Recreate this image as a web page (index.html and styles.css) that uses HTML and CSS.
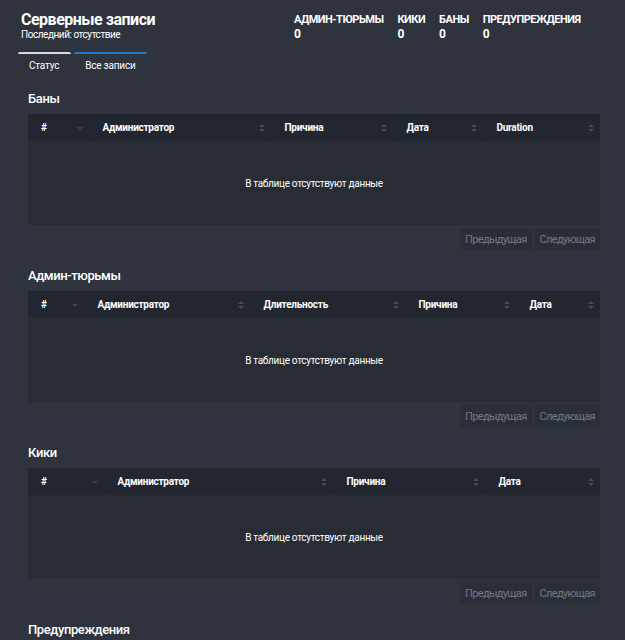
FILE: index.html
```html
<!DOCTYPE html>
<html lang="ru">
<head>
  <meta charset="UTF-8">
  <meta name="viewport" content="width=device-width, initial-scale=1.0">
  <title>Серверные записи</title>
  <link rel="stylesheet" href="styles.css">
</head>
<body>
  <header class="top">
    <div class="title-block">
      <h1>Серверные записи</h1>
      <p class="last">Последний: отсутствие</p>
    </div>
    <div class="stats">
      <div class="stat"><span class="stat-label">Админ-тюрьмы</span><span class="stat-value">0</span></div>
      <div class="stat"><span class="stat-label">Кики</span><span class="stat-value">0</span></div>
      <div class="stat"><span class="stat-label">Баны</span><span class="stat-value">0</span></div>
      <div class="stat"><span class="stat-label">Предупреждения</span><span class="stat-value">0</span></div>
    </div>
  </header>

  <nav class="tabs">
    <a href="#status" class="tab">Статус</a>
    <a href="#all" class="tab active">Все записи</a>
  </nav>

  <main>
    <!-- Bans -->
    <section class="records">
      <h2>Баны</h2>
      <table class="grid">
        <colgroup>
          <col style="width:61px"><col style="width:182px"><col style="width:122px"><col style="width:90px"><col style="width:117px">
        </colgroup>
        <thead>
          <tr>
            <th class="sorted"># <span class="sort down"></span></th>
            <th>Администратор <span class="sort"></span></th>
            <th>Причина <span class="sort"></span></th>
            <th>Дата <span class="sort"></span></th>
            <th>Duration <span class="sort"></span></th>
          </tr>
        </thead>
        <tbody>
          <tr><td colspan="5" class="empty">В таблице отсутствуют данные</td></tr>
        </tbody>
      </table>
      <div class="pager">
        <button class="page-btn" disabled>Предыдущая</button>
        <button class="page-btn" disabled>Следующая</button>
      </div>
    </section>

    <!-- Admin jails -->
    <section class="records">
      <h2>Админ-тюрьмы</h2>
      <table class="grid">
        <colgroup>
          <col style="width:56px"><col style="width:166px"><col style="width:155px"><col style="width:111px"><col style="width:84px">
        </colgroup>
        <thead>
          <tr>
            <th class="sorted"># <span class="sort down"></span></th>
            <th>Администратор <span class="sort"></span></th>
            <th>Длительность <span class="sort"></span></th>
            <th>Причина <span class="sort"></span></th>
            <th>Дата <span class="sort"></span></th>
          </tr>
        </thead>
        <tbody>
          <tr><td colspan="5" class="empty">В таблице отсутствуют данные</td></tr>
        </tbody>
      </table>
      <div class="pager">
        <button class="page-btn" disabled>Предыдущая</button>
        <button class="page-btn" disabled>Следующая</button>
      </div>
    </section>

    <!-- Kicks -->
    <section class="records">
      <h2>Кики</h2>
      <table class="grid">
        <colgroup>
          <col style="width:76px"><col style="width:229px"><col style="width:152px"><col style="width:115px">
        </colgroup>
        <thead>
          <tr>
            <th class="sorted"># <span class="sort down"></span></th>
            <th>Администратор <span class="sort"></span></th>
            <th>Причина <span class="sort"></span></th>
            <th>Дата <span class="sort"></span></th>
          </tr>
        </thead>
        <tbody>
          <tr><td colspan="4" class="empty">В таблице отсутствуют данные</td></tr>
        </tbody>
      </table>
      <div class="pager">
        <button class="page-btn" disabled>Предыдущая</button>
        <button class="page-btn" disabled>Следующая</button>
      </div>
    </section>

    <!-- Warnings -->
    <section class="records">
      <h2>Предупреждения</h2>
    </section>
  </main>
</body>
</html>
```

FILE: styles.css
```css
/* General */
html, body {
  margin: 0;
  padding: 0;
  background: #2e333d;
  color: #fff;
  font-family: Roboto, 'Liberation Sans', sans-serif;
  font-size: 11px;
  overflow: hidden;
}
body {
  height: 640px;
}
/* Header */
.top {
  display: flex;
  padding: 10px 0 0 21px;
}
.title-block {
  width: 273px;
}
h1 {
  margin: 0;
  font-size: 16px;
  font-weight: 700;
  line-height: 19px;
  letter-spacing: -0.5px;
}
.last {
  margin: -1px 0 0;
  font-size: 10px;
  line-height: 13px;
  letter-spacing: -0.45px;
}
.stats {
  display: flex;
  gap: 14px;
  padding-top: 3px;
}
.stat {
  display: flex;
  flex-direction: column;
}
.stat-label {
  text-transform: uppercase;
  font-weight: 700;
  font-size: 11px;
  line-height: 14px;
  letter-spacing: -0.5px;
}
.stat-value {
  font-weight: 700;
  font-size: 12px;
  line-height: 14px;
}
/* Tabs */
.tabs {
  display: flex;
  gap: 3px;
  padding: 11px 0 0 18px;
}
.tab {
  color: #fff;
  text-decoration: none;
  border-top: 2px solid #d9d9d9;
  border-radius: 2px;
  padding: 5px 11px 0;
  font-size: 10px;
  line-height: 14px;
  letter-spacing: -0.2px;
}
.tab:first-child {
  padding-right: 12px;
}
.tab.active {
  border-top-color: #1a7fd4;
}
/* Sections */
main {
  padding: 18px 25px 0 28px;
}
.records {
  margin-bottom: 18px;
}
.records h2 {
  margin: 0 0 7px;
  font-size: 13px;
  font-weight: 500;
  line-height: 16px;
  letter-spacing: -0.4px;
}
/* Tables */
.grid {
  width: 100%;
  table-layout: fixed;
  border-collapse: collapse;
}
.grid th {
  position: relative;
  background: #22262e;
  height: 27px;
  padding: 0 13px;
  text-align: left;
  font-weight: 700;
  font-size: 10px;
  letter-spacing: -0.25px;
  border-left: 1px solid #20242b;
}
.grid th:first-child {
  border-left: none;
}
.grid td.empty {
  background: #282c35;
  height: 84px;
  text-align: center;
  padding: 0;
  font-size: 10px;
  letter-spacing: -0.3px;
}
/* Sort icons */
.sort {
  position: absolute;
  right: 6px;
  top: 50%;
  width: 6px;
  height: 8px;
  margin-top: -4px;
}
.sort::before, .sort::after {
  content: "";
  position: absolute;
  left: 0;
  border-left: 3px solid transparent;
  border-right: 3px solid transparent;
}
.sort::before {
  top: 0;
  border-bottom: 3px solid #464b54;
}
.sort::after {
  bottom: 0;
  border-top: 3px solid #464b54;
}
.sort.down::before {
  display: none;
}
.sort.down::after {
  bottom: 2px;
  border-top-color: #3c4049;
}
/* Pagination */
.pager {
  display: flex;
  justify-content: flex-end;
  gap: 3px;
  margin-top: 3px;
}
.page-btn {
  background: #2a2e37;
  color: #737881;
  border: none;
  height: 22px;
  padding: 0 5px;
  font-family: inherit;
  font-size: 11px;
  letter-spacing: -0.65px;
}
```
